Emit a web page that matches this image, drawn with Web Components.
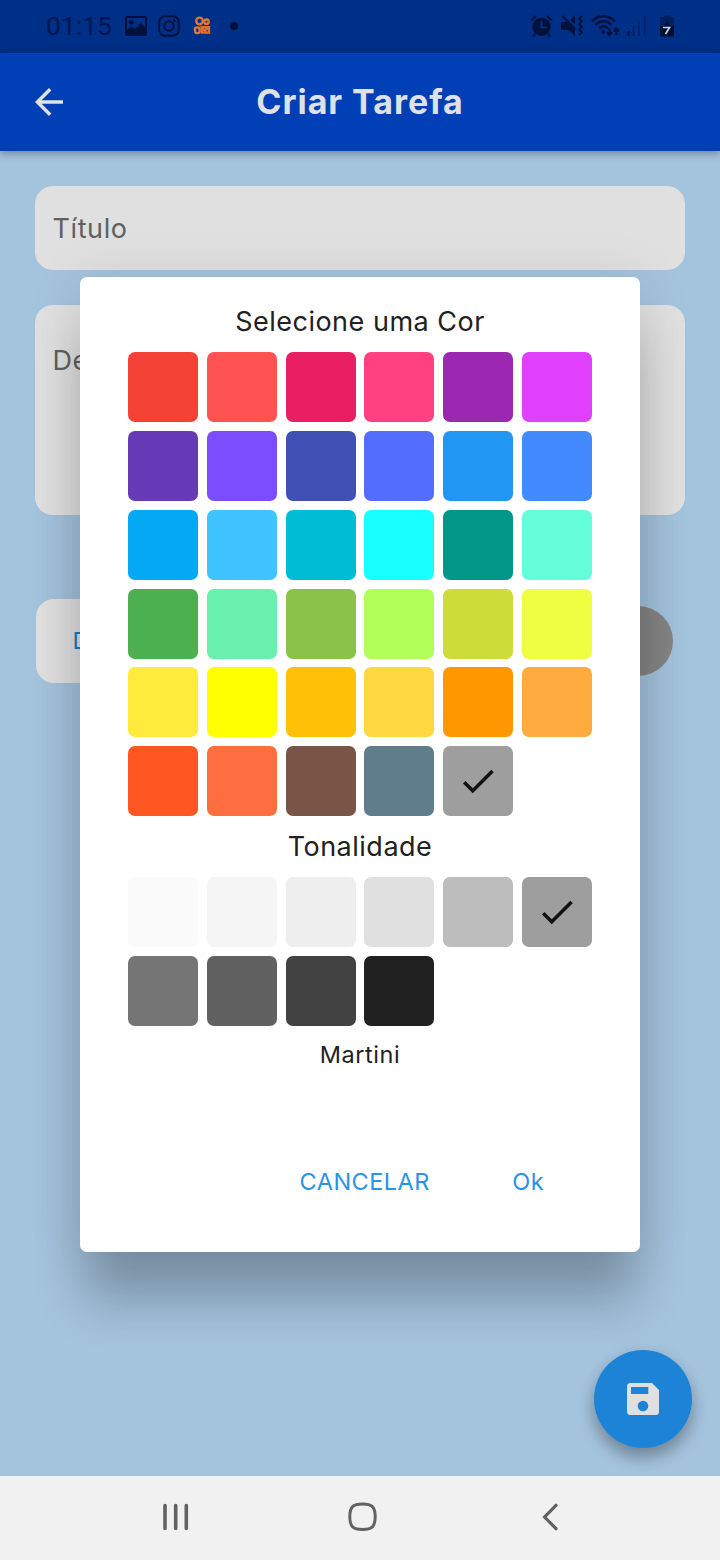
<!DOCTYPE html>
<html lang="pt-BR">
<head>
<meta charset="utf-8">
<title>Criar Tarefa</title>
<style>
html,body{margin:0;padding:0}
body{width:720px;height:1560px;overflow:hidden;font-family:Inter,"Liberation Sans",sans-serif;font-optical-sizing:none;font-variation-settings:"opsz" 14}
</style>
</head>
<body>
<task-screen></task-screen>
<script>
const define = (name, html, setup) => customElements.define(name, class extends HTMLElement {
  constructor() {
    super();
    this.attachShadow({ mode: "open" }).innerHTML = html;
    if (setup) setup(this);
  }
});

define("status-bar", `
<style>
:host{display:flex;align-items:center;justify-content:space-between;height:53px;box-sizing:border-box;padding:0 45px 2px 46px;background:#002f87;color:#00123c}
.g{display:flex;align-items:center}
.time{font:400 26.5px/32px Roboto,sans-serif;letter-spacing:0;width:78.500px;color:#001650}
svg{display:block;flex:none}
</style>
<div class="g">
  <span class="time">01:15</span>
  <svg width="22" height="20" viewBox="0 0 22 20"><path fill="currentColor" fill-rule="evenodd" d="M2 0h18a2 2 0 0 1 2 2v16a2 2 0 0 1-2 2H2a2 2 0 0 1-2-2V2a2 2 0 0 1 2-2zM2 2v12l4-4 4 3 6-6 4 4V2zM6.400 4a2.400 2.400 0 1 1 0 4.800 2.400 2.400 0 0 1 0-4.800z"/></svg>
  <svg width="22" height="22" viewBox="0 0 22 22" style="margin-left:11px" fill="none" stroke="currentColor" stroke-width="2"><rect x="1.200" y="1.200" width="19.600" height="19.600" rx="6"/><circle cx="11" cy="11" r="4.800"/><circle cx="16.300" cy="5.500" r="1.300" fill="currentColor" stroke="none"/></svg>
  <svg width="18" height="19" viewBox="0 0 18 19" style="margin-left:13px" fill="none" stroke="#e0792e" stroke-width="2.300"><circle cx="6.500" cy="5" r="3.300"/><circle cx="13.500" cy="5.700" r="2.200"/><rect x="2" y="11.500" width="4.500" height="5.500" rx="1.500" transform="rotate(-8 4 14)"/><path d="M8.500 11.200h7.500v5.500H9zM9 12l4 4M11 15l4-3" stroke="#e56d24"/></svg>
  <svg width="8" height="8" style="margin-left:19.500px"><circle cx="4" cy="4" r="4" fill="currentColor"/></svg>
</div>
<div class="g">
  <svg width="23" height="22" viewBox="0 0 23 22"><g fill="none" stroke="currentColor" stroke-width="2.200"><path d="M1 5.500 6 1M22 5.500 17 1M5 19l-2 2.500M18 19l2 2.500"/></g><circle cx="11.500" cy="11.800" r="9.200" fill="currentColor"/><path d="M11.500 6v6.400h5" fill="none" stroke="#002f87" stroke-width="1.900"/></svg>
  <svg width="22" height="22" viewBox="0 0 22 22" style="margin-left:8px"><path fill="currentColor" d="M0 7h4.500l2-2L14 12.300V21l-6.500-6H0zM14 0v9.500L9.200 4.900z"/><path d="m1.500 1 13 13.500M21 1l-3 2.700 3 2.700-3 2.700 3 2.700-3 2.700 3 2.700-3 2.700" fill="none" stroke="currentColor" stroke-width="2"/></svg>
  <svg width="29" height="22" viewBox="0 0 29 22" style="margin-left:8px" fill="none" stroke="currentColor"><path d="M1 6.500C7-.5 18-.5 24 6.500M4.500 10c4.500-5 11.500-5 16 0M8 13.500c3-3 6.500-3 9 0" stroke-width="2.300"/><circle cx="12.300" cy="17" r="1.900" fill="currentColor" stroke="none"/><path d="M18.500 13v7m-2.500-2.700 2.500 2.700 2.500-2.700M25.500 20v-6.500m-2.500 2.700 2.500-2.700 2.500 2.700" stroke-width="2"/></svg>
  <svg width="19" height="21" viewBox="0 0 19 21" style="margin-left:7px" stroke-width="2"><path d="M1.500 16v5" stroke="#00123c"/><path d="M6.500 11v10M12 6v15M17.500 1v20" stroke="#012269"/></svg>
  <svg width="14" height="22" viewBox="0 0 14 22" style="margin-left:14px;margin-right:1px"><path d="M4 0h6v2h4v10H0V2h4z" fill="#00205f"/><path d="M0 11h14v9a1.500 1.500 0 0 1-1.500 1.500h-11A1.500 1.500 0 0 1 0 20z" fill="#000f30"/><path d="M7 6 3.500 11h7z" fill="#00143f"/><path d="M3 12.500h6.500L5.500 19" fill="none" stroke="#c7cfdf" stroke-width="1.700"/></svg>
</div>`);

define("app-bar", `
<style>
:host{display:grid;grid-template-columns:98px 1fr 98px;align-items:center;height:98px;background:#003fb5;color:#dfe1e6;box-shadow:0 2px 8px rgba(0,0,0,.36);position:relative}
svg{display:block;margin-left:35px}
h1{margin:0;text-align:center;font-size:34px;line-height:42px;font-weight:700;letter-spacing:.95px}
</style>
<svg width="28" height="28" viewBox="0 0 28 28" fill="none" stroke="currentColor" stroke-width="3.400"><path d="M28 14H3M15.200 1.200 2.400 14l12.800 12.800"/></svg>
<h1><slot></slot></h1>`);

define("text-field", `
<style>
:host{display:block;box-sizing:border-box;background:#e0e0e0;border-radius:18px;color:#606060;font-size:27px;font-weight:385;line-height:34px;letter-spacing:.6px;padding:26px 17.500px 24px}
</style><slot></slot>`);

define("date-row", `
<style>
:host{display:flex;align-items:center;justify-content:space-between;padding:0 12px 0 1px}
button{font:400 23.500px/30px Inter,sans-serif;color:#2478bd;background:#e0e0e0;border:0;border-radius:18px;width:200px;height:84px;text-align:left;padding:0 0 0 36.500px}
i{display:block;width:70px;height:70px;border-radius:50%;background:#858585}
</style><button><slot></slot></button><i></i>`);

define("save-fab", `
<style>
:host{display:flex;align-items:center;justify-content:center;width:98px;height:98px;border-radius:50%;background:#1d83d6;box-shadow:0 10px 16px rgba(0,0,0,.28),0 3px 18px rgba(0,0,0,.06)}
</style>
<svg width="32" height="32" viewBox="0 0 32 32"><path fill="#e0e0e0" fill-rule="evenodd" d="M3.500 0H25l7 7v21.500a3.500 3.500 0 0 1-3.500 3.500h-25A3.500 3.500 0 0 1 0 28.500v-25A3.500 3.500 0 0 1 3.500 0zM4 4v7h17.300V4zM16 17.700a5.300 5.300 0 1 0 0 10.600 5.300 5.300 0 0 0 0-10.600z"/></svg>`);

define("nav-bar", `
<style>
:host{display:grid;grid-template-columns:185px 194px 16px;align-items:center;height:84px;box-sizing:border-box;padding:0 0 3px 163px;background:#f1f1f1}
svg{display:block}
</style>
<svg width="26" height="28" viewBox="0 0 26 28" stroke="#626262" stroke-width="3.600" stroke-linecap="round"><path d="M2 2.500v23M12.700 2.500v23M23.300 2.500v23"/></svg>
<svg width="30" height="30" viewBox="0 0 30 30" fill="none" stroke="#626262" stroke-width="3"><path d="M14.500 2c9.500 0 12.700 2.700 12.700 12.700S24 27.400 14.500 27.400 1.800 24.700 1.800 14.700 5 2 14.500 2z"/></svg>
<svg width="16" height="28" viewBox="0 0 16 28" fill="none" stroke="#626262" stroke-width="3.200" stroke-linecap="round" stroke-linejoin="miter"><path d="M14 2.300 2.600 14 14 25.700"/></svg>`);

define("color-swatch", `
<style>
:host{display:flex;align-items:center;justify-content:center;width:70px;height:70px;border-radius:7px}
svg{display:none}
:host([selected]) svg{display:block}
</style>
<svg width="42" height="42" viewBox="0 0 24 24"><path fill="#111" d="M9 16.170 4.830 12l-1.420 1.410L9 19 21 7l-1.410-1.410z"/></svg>`);

define("swatch-grid", `
<style>
:host{display:grid;grid-template-columns:repeat(6,70px);gap:8.750px}
</style>`, host => {
  const selected = host.getAttribute("selected");
  for (const c of host.getAttribute("colors").split(" ")) {
    const s = document.createElement("color-swatch");
    s.style.background = "#" + c;
    if (c === selected) s.setAttribute("selected", "");
    host.shadowRoot.append(s);
  }
});

define("color-dialog", `
<style>
:host{display:flex;flex-direction:column;align-items:center;box-sizing:border-box;width:560px;height:975px;padding-top:28px;background:#fff;border-radius:7px;color:#212121;font-weight:385;box-shadow:0 54px 50px -5px rgba(0,0,0,.23),0 4px 56px 0 rgba(0,0,0,.1)}
h2{margin:0;font-size:27px;font-weight:385;line-height:34px;letter-spacing:.5px}
.first{margin-bottom:13.250px}
.second{margin:14px 0 13px}
p{margin:14.500px 0 0;font-size:23.500px;line-height:30px;letter-spacing:.55px}
footer{display:flex;align-self:stretch;justify-content:flex-end;gap:82.500px;padding:97px 96px 0 0;font-size:23.500px;line-height:30px;letter-spacing:.45px;color:#2b93e4}
</style>
<h2 class="first">Selecione uma Cor</h2>
<swatch-grid selected="9e9e9e" colors="f44336 ff5252 e91e63 ff4081 9c27b0 e040fb 673ab7 7c4dff 3f51b5 536dfe 2196f3 448aff 03a9f4 40c4ff 00bcd4 18ffff 009688 64ffda 4caf50 69f0ae 8bc34a b2ff59 cddc39 eeff41 ffeb3b ffff00 ffc107 ffd740 ff9800 ffab40 ff5722 ff6e40 795548 607d8b 9e9e9e"></swatch-grid>
<h2 class="second">Tonalidade</h2>
<swatch-grid selected="9e9e9e" colors="fafafa f5f5f5 eeeeee e0e0e0 bdbdbd 9e9e9e 757575 616161 424242 212121"></swatch-grid>
<p>Martini</p>
<footer><span>CANCELAR</span><span>Ok</span></footer>`);

define("task-screen", `
<style>
:host{display:flex;flex-direction:column;position:relative;width:720px;height:1560px;background:#a4c3dd;overflow:hidden}
main{flex:1;display:flex;flex-direction:column;padding:35px 35px 0}
.title{height:84px}
.desc{height:210px;margin-top:35px;padding-top:39px}
date-row{margin-top:84px}
.overlay{position:absolute;left:0;right:0;top:277px;display:flex;justify-content:center}
save-fab{position:absolute;right:28px;bottom:112px}
nav-bar{position:relative}
</style>
<status-bar></status-bar>
<app-bar>Criar Tarefa</app-bar>
<main>
  <text-field class="title">Título</text-field>
  <text-field class="desc">Descrição</text-field>
  <date-row>Data</date-row>
</main>
<div class="overlay"><color-dialog></color-dialog></div>
<save-fab></save-fab>
<nav-bar></nav-bar>`);
</script>
</body>
</html>
